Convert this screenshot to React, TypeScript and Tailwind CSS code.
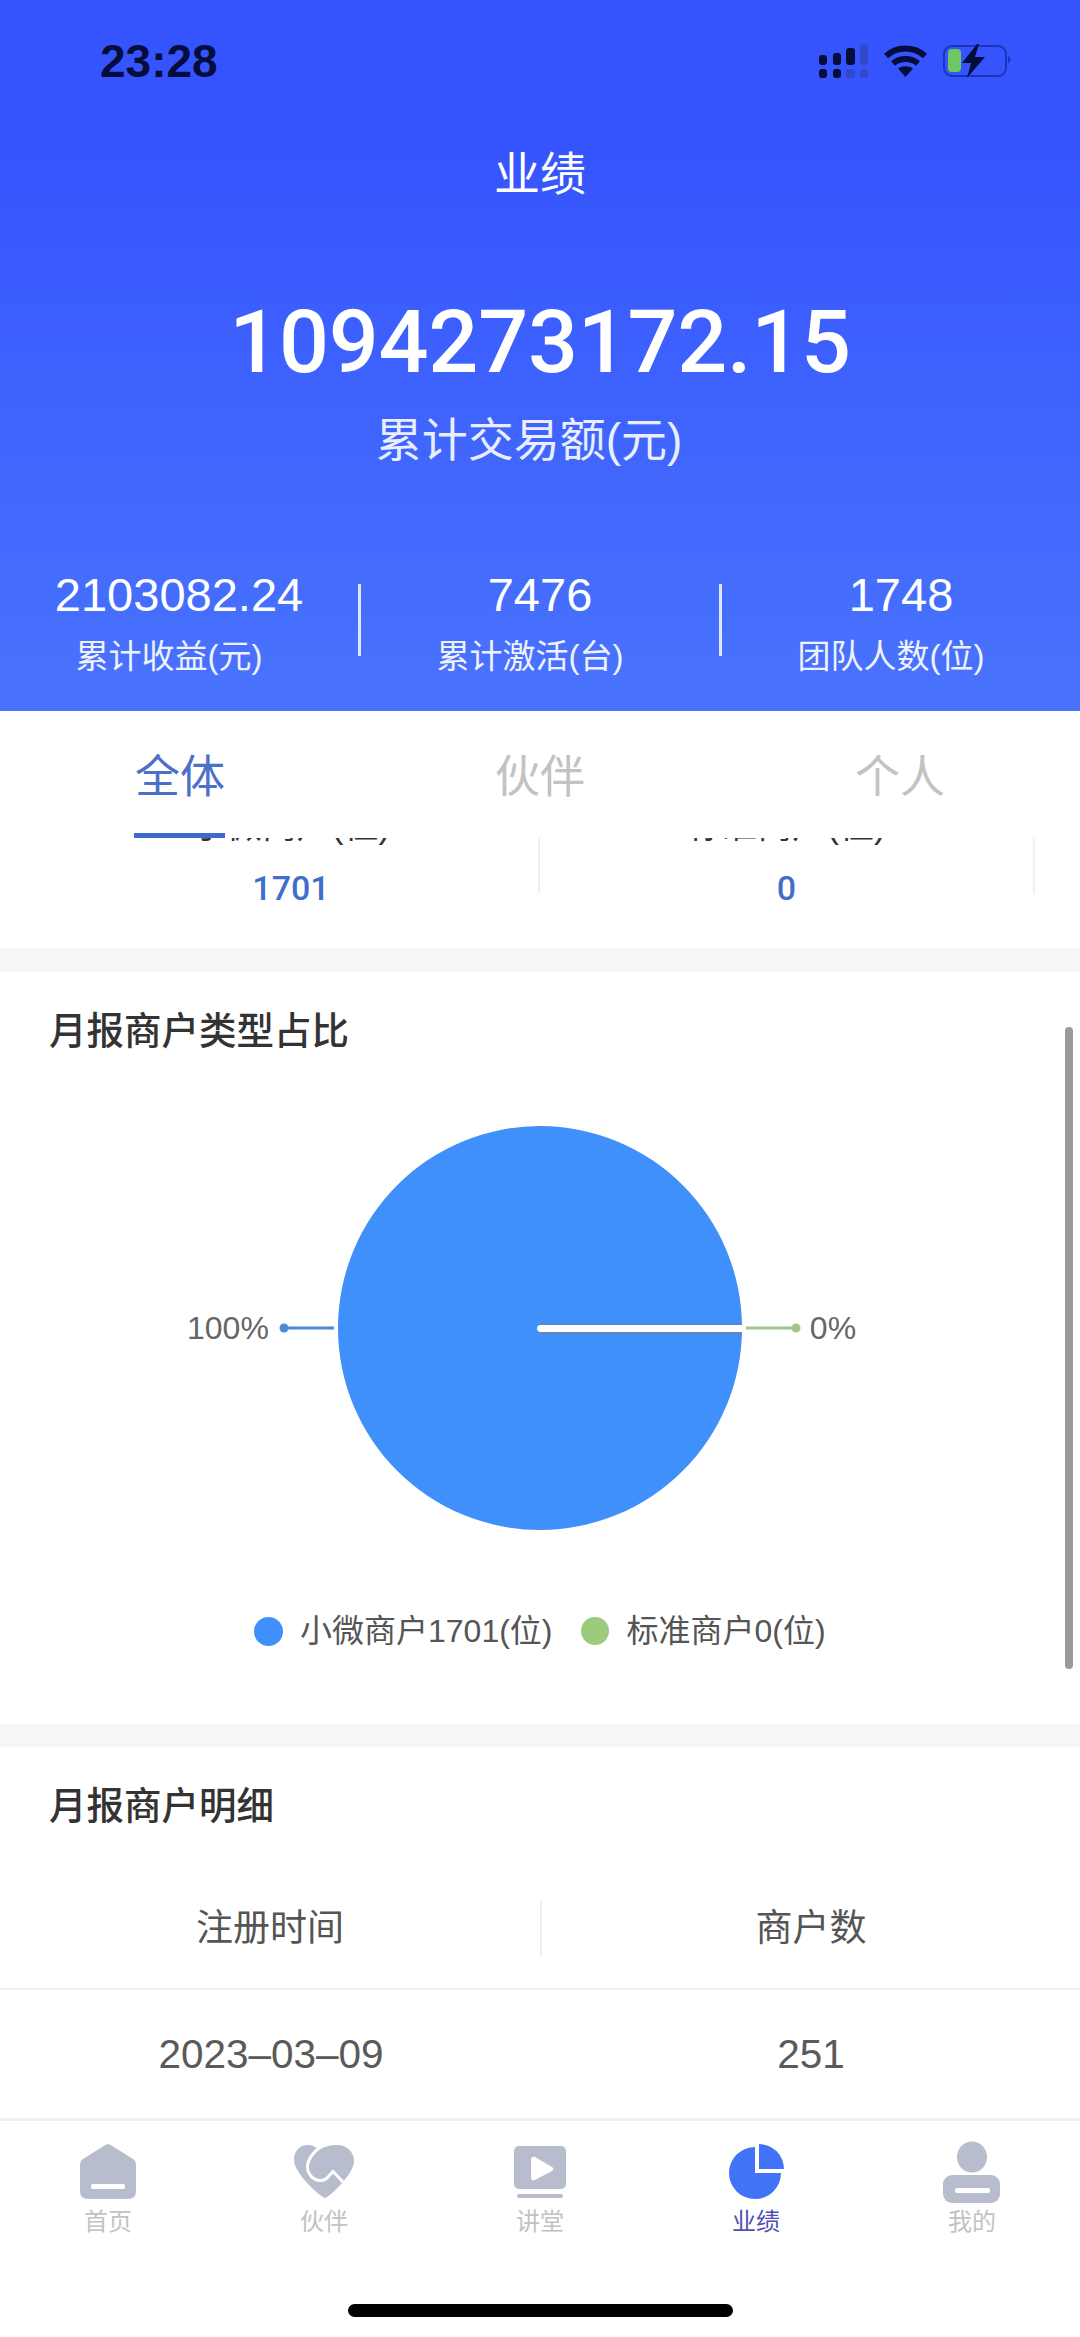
const sans = "font-['Liberation_Sans','Noto_Sans_CJK_SC',sans-serif]"

function SignalIcon() {
    return (
        <svg width="49" height="34" viewBox="0 0 49 34">
            <rect x="0" y="11" width="8" height="10" rx="3" fill="#050d3c" />
            <rect x="14" y="9" width="8" height="12" rx="3" fill="#050d3c" />
            <rect x="27" y="4" width="9" height="17" rx="3" fill="#050d3c" />
            <rect x="41" y="0" width="8" height="21" rx="3" fill="#3148c8" />
            <rect x="0" y="25" width="8" height="9" rx="3" fill="#050d3c" />
            <rect x="14" y="25" width="8" height="9" rx="3" fill="#050d3c" />
            <rect x="27" y="25" width="9" height="9" rx="3" fill="#3148c8" />
            <rect x="41" y="25" width="8" height="9" rx="3" fill="#3148c8" />
        </svg>
    )
}

function WifiIcon() {
    return (
        <svg width="43" height="32" viewBox="0 0 43 32" fill="none" stroke="#050d3c" strokeWidth="6">
            <path d="M2 11 C13 1 30 1 41 11" />
            <path d="M9 18.500 C16 12.500 27 12.500 34 18.500" />
            <path d="M14 23.500 L21.500 32 L29 23.500 C24 20.500 19 20.500 14 23.500 Z" fill="#050d3c" stroke="none" />
        </svg>
    )
}

function BatteryIcon() {
    return (
        <svg width="68" height="34" viewBox="0 0 68 34" fill="none">
            <rect x="1" y="2" width="62" height="30" rx="8" stroke="#1c35b5" strokeWidth="2" />
            <rect x="5" y="5" width="13" height="23" rx="4" fill="#6dc861" />
            <path d="M34 0 L19 19 L28 19 L24 34 L42 13 L32 13 L36 0 Z" fill="#050d3c" />
            <path d="M65 11 L68 15.500 L65 20 Z" fill="#1c35b5" />
        </svg>
    )
}

function HomeIcon() {
    return (
        <svg width="72" height="64" viewBox="0 0 72 64">
            <path d="M32.500 5.500 Q36 3 39.500 5.500 L61 19 Q64 21 64 25 L64 51 Q64 59 56 59 L16 59 Q8 59 8 51 L8 25 Q8 21 11 19 Z" fill="#b8bdcd" />
            <rect x="19" y="44" width="34" height="5" rx="1.500" fill="#fff" />
        </svg>
    )
}

function PartnerIcon() {
    return (
        <svg width="72" height="64" viewBox="0 0 72 64" fill="none">
            <path d="M37 58 C34 58 6 34 6 20 C6 11 12 5 20 5 C25 5 28 7 31 10 C35 7 42 5 49 5 C59 5 66 12 66 21 C66 35 40 58 37 58 Z" fill="#b8bdcd" />
            <path d="M31 8 C21 16 17 26 21 33 C25 41 35 43 40 37 L45 31.500 L55 42" stroke="#fff" strokeWidth="3" />
        </svg>
    )
}

function VideoIcon() {
    return (
        <svg width="72" height="64" viewBox="0 0 72 64">
            <rect x="10" y="6" width="52" height="43" rx="5" fill="#b8bdcd" />
            <path d="M27 20 C27 17 29 16 31 17 L48 27 C50 28 50 30 48 31 L31 40 C29 41 27 40 27 38 Z" fill="#fff" />
            <rect x="13" y="54" width="46" height="4" rx="2" fill="#b8bdcd" />
        </svg>
    )
}

function PieIcon() {
    return (
        <svg width="72" height="64" viewBox="0 0 72 64" fill="#4272f6">
            <path d="M35 7 A26 26 0 1 0 61 33 L35 33 Z" />
            <path d="M39 4 A25 25 0 0 1 64 29 L39 29 Z" />
        </svg>
    )
}

function UserIcon() {
    return (
        <svg width="72" height="64" viewBox="0 0 72 64">
            <ellipse cx="36" cy="17" rx="15" ry="15.500" fill="#b8bdcd" />
            <rect x="7" y="35" width="57" height="28" rx="9" fill="#b8bdcd" />
            <rect x="19" y="48" width="35" height="5" rx="2" fill="#fff" />
        </svg>
    )
}

function Stat({ value, label }: { value: string; label: string }) {
    return (
        <div className="w-[358px] flex flex-col items-center">
            <div className="h-[60px] flex items-center text-[47px] leading-none">{value}</div>
            <div className="mt-[4px] pr-[20px] h-[56px] flex items-center text-[33px] leading-none text-[#eef2ff]">{label}</div>
        </div>
    )
}

function NavItem({ label, active, children }: { label: string; active?: boolean; children: React.ReactNode }) {
    return (
        <div className="w-[216px] flex flex-col items-center">
            {children}
            <span className={`mt-[3px] h-[30px] flex items-center text-[24px] leading-none ${active ? "text-[#4f50b5]" : "text-[#c2c2c2]"}`}>{label}</span>
        </div>
    )
}

export default function App() {
    return (
        <div className={`w-[1080px] h-[2337px] flex flex-col overflow-hidden bg-white relative ${sans}`}>
            <header className="h-[711px] shrink-0 bg-linear-to-b from-[#3654fe] from-20% to-[#4a73fd] text-white">
                <div className="h-[122px] flex items-center justify-between pl-[100px] pr-[69px]">
                    <span className="text-[46px] font-bold leading-none text-[#050d3c]">23:28</span>
                    <div className="flex items-center gap-[16px]">
                        <SignalIcon />
                        <WifiIcon />
                        <BatteryIcon />
                    </div>
                </div>
                <h1 className="h-[104px] flex items-center justify-center text-[46px] font-normal">业绩</h1>
                <div className="mt-[68px] h-[96px] flex items-center justify-center font-['Roboto',sans-serif] font-medium text-[88px] leading-none tracking-[-0.25px]">1094273172.15</div>
                <div className="mt-[20px] pr-[22px] h-[60px] flex items-center justify-center text-[46px] leading-none text-[#e9eeff]">累计交易额(元)</div>
                <div className="mt-[94px] flex items-start">
                    <Stat value="2103082.24" label="累计收益(元)" />
                    <div className="mt-[20px] w-[3px] h-[72px] bg-[#dfe6ff]" />
                    <Stat value="7476" label="累计激活(台)" />
                    <div className="mt-[20px] w-[3px] h-[72px] bg-[#dfe6ff]" />
                    <Stat value="1748" label="团队人数(位)" />
                </div>
            </header>

            <div className="h-[127px] shrink-0 flex relative z-10 bg-white text-[45px]">
                <div className="w-[360px] flex items-center justify-center pt-[7px] text-[#4a70c9] relative">
                    全体
                    <div className="absolute bottom-0 left-[134px] w-[91px] h-[5px] bg-[#4069cf]" />
                </div>
                <div className="w-[360px] flex items-center justify-center pt-[7px] text-[#c2c2c2]">伙伴</div>
                <div className="w-[360px] flex items-center justify-center pt-[7px] text-[#c2c2c2]">个人</div>
            </div>

            <main className="flex-1 overflow-hidden relative">
                <section className="-mt-[38px] pb-[22px] pl-[44px] flex items-start">
                    <div className="w-[494px] flex flex-col items-center">
                        <div className="h-[50px] flex items-center text-[35px] leading-none text-[#333]">小微商户(位)</div>
                        <div className="h-[76px] flex items-center text-[34px] font-['Roboto',sans-serif] font-medium leading-none text-[#3f6fc9]">1701</div>
                    </div>
                    <div className="w-[2px] h-[94px] bg-[#f0f0f0]" />
                    <div className="w-[493px] flex flex-col items-center">
                        <div className="h-[50px] flex items-center text-[35px] leading-none text-[#333]">标准商户(位)</div>
                        <div className="h-[76px] flex items-center text-[34px] font-['Roboto',sans-serif] font-medium leading-none text-[#3f6fc9]">0</div>
                    </div>
                    <div className="w-[2px] h-[94px] bg-[#f0f0f0]" />
                </section>

                <div className="h-[24px] bg-[#f6f6f6]" />

                <section className="pt-[35px] pb-[73px]">
                    <h2 className="h-[50px] pl-[49px] flex items-center text-[37.5px] font-medium leading-none text-[#333]">月报商户类型占比</h2>
                    <div className="mt-[51px] h-[440px] pl-[187px] flex items-center text-[32px] leading-none text-[#666]">
                        <span>100%</span>
                        <svg className="ml-[9px]" width="524" height="440" viewBox="0 0 524 440">
                            <circle cx="262" cy="220" r="202" fill="#3f90fb" />
                            <rect x="262" y="215" width="202" height="12" fill="#5b88c8" />
                            <path d="M262.500 217 L464 217 L464 224 L262.500 224 A3.500 3.500 0 0 1 262.500 217 Z" fill="#fff" />
                            <line x1="6" y1="220" x2="56" y2="220" stroke="#4a8ad8" strokeWidth="3" />
                            <circle cx="6" cy="220" r="4.500" fill="#4a8ad8" />
                            <line x1="468" y1="220" x2="518" y2="220" stroke="#a3c48a" strokeWidth="3" />
                            <circle cx="518" cy="220" r="4.500" fill="#a3c48a" />
                        </svg>
                        <span className="ml-[8px]">0%</span>
                    </div>
                    <div className="mt-[63px] h-[40px] pl-[254px] flex items-center text-[32px] leading-none text-[#555]">
                        <span className="w-[29px] h-[29px] rounded-full bg-[#3f90fb]" />
                        <span className="ml-[17px]">小微商户1701(位)</span>
                        <span className="ml-[28px] w-[28px] h-[28px] rounded-full bg-[#9ccb7d]" />
                        <span className="ml-[18px]">标准商户0(位)</span>
                    </div>
                </section>

                <div className="h-[23px] bg-[#f6f6f6]" />

                <section className="pt-[35px]">
                    <h2 className="h-[50px] pl-[49px] flex items-center text-[37.5px] font-medium leading-none text-[#333]">月报商户明细</h2>
                    <div className="mt-[36px] h-[122px] flex items-center border-b-2 border-[#efefef] text-[37px] leading-none text-[#555]">
                        <div className="w-[540px] text-center">注册时间</div>
                        <div className="w-[2px] h-[57px] bg-[#f0f0f0]" />
                        <div className="flex-1 text-center">商户数</div>
                    </div>
                    <div className="h-[128px] flex items-center text-[40.5px] leading-none text-[#5a5a5a]">
                        <div className="w-[542px] text-center">2023–03–09</div>
                        <div className="flex-1 text-center">251</div>
                    </div>
                </section>

                <div className="absolute left-[1065px] top-[189px] w-[8px] h-[642px] rounded-full bg-[#9a9a9a]" />
            </main>

            <nav className="h-[219px] shrink-0 border-t-[3px] border-[#efefef] pt-[19px] bg-white">
                <div className="flex">
                    <NavItem label="首页"><HomeIcon /></NavItem>
                    <NavItem label="伙伴"><PartnerIcon /></NavItem>
                    <NavItem label="讲堂"><VideoIcon /></NavItem>
                    <NavItem label="业绩" active><PieIcon /></NavItem>
                    <NavItem label="我的"><UserIcon /></NavItem>
                </div>
                <div className="mt-[67px] mx-auto w-[385px] h-[13px] rounded-full bg-black" />
            </nav>
        </div>
    )
}
